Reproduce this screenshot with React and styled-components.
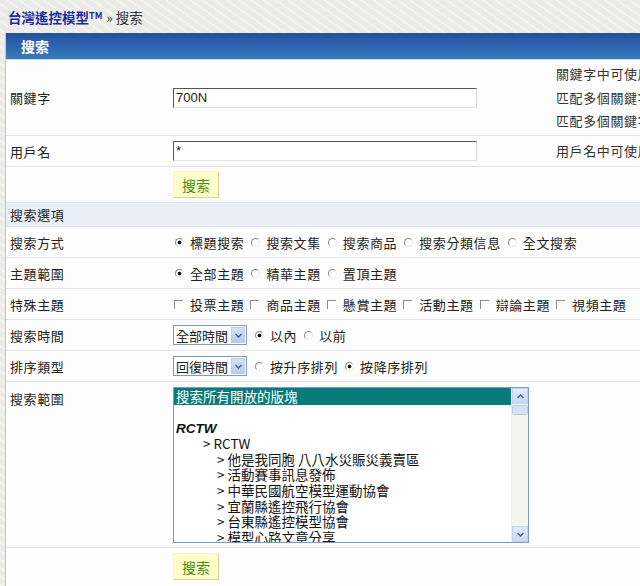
import styled, { createGlobalStyle } from 'styled-components';

const GlobalStyle = createGlobalStyle`
  html, body {
    margin: 0;
    padding: 0;
    overflow: hidden;
    background: #eeeeeb;
    font-family: "Noto Sans CJK TC", "Liberation Sans", sans-serif;
    font-size: 13px;
    color: #222;
  }
`;

const Page = styled.div`
  width: 640px;
  height: 586px;
  overflow: hidden;
  background:
    repeating-linear-gradient(35deg, rgba(255,255,255,0.35) 0 2px, transparent 2px 7px),
    #ebebe8;
`;

const Crumbs = styled.div`
  height: 33px;
  display: flex;
  align-items: center;
  padding-left: 8px;
  font-size: 13.5px;
  color: #333;
  gap: 4px;
`;

const SiteLink = styled.span`
  color: #1c2c9c;
  font-weight: bold;
  sup {
    font-size: 9px;
    vertical-align: 4px;
  }
`;

const Box = styled.div`
  margin-left: 5px;
  width: 900px;
  border-left: 1px solid #b9c8d8;
  background: #fdfdfd;
`;

const Head = styled.div`
  height: 26px;
  display: flex;
  align-items: center;
  padding-left: 15px;
  color: #fff;
  font-weight: bold;
  font-size: 14px;
  background: linear-gradient(#22509c, #3a7bbf);
  border-bottom: 1px solid #c4d6ea;
`;

const Row = styled.div`
  display: grid;
  grid-template-columns: 167px 383px 1fr;
  align-items: ${p => (p.$top ? 'start' : 'center')};
  height: ${p => p.$h}px;
  box-sizing: border-box;
  border-bottom: 1px solid #e2e6eb;
  background: ${p => (p.$shade ? '#e9eef7' : 'transparent')};
  letter-spacing: 0.6px;
`;

const Label = styled.div`
  padding-left: 4px;
  padding-top: ${p => p.$pt || 0}px;
`;

const Cell = styled.div`
  display: flex;
  align-items: center;
  white-space: nowrap;
  min-width: 0;
  padding-top: ${p => p.$pt || 0}px;
`;

const Help = styled.div`
  line-height: 23.5px;
  color: #333;
  white-space: nowrap;
`;

const TextInput = styled.div`
  width: 304px;
  height: 20px;
  box-sizing: border-box;
  border: 1px solid;
  border-color: #555 #d4d4d4 #e2e2e2 #555;
  background: #fff;
  font-family: "Liberation Sans", sans-serif;
  font-size: 13px;
  line-height: 18px;
  padding-left: 2px;
  color: #222;
  letter-spacing: 0;
`;

const Button = styled.div`
  width: 46px;
  height: 27px;
  box-sizing: border-box;
  display: flex;
  align-items: center;
  justify-content: center;
  background: #ffffc6;
  border: 1px solid;
  border-color: #f3f3dc #d6d29a #d6d29a #f3f3dc;
  color: #3d8f27;
  font-size: 14px;
  letter-spacing: 0;
`;

const Option = styled.span`
  display: inline-flex;
  align-items: center;
  flex-shrink: 0;
  white-space: nowrap;
  margin-right: 5px;
`;

const Radio = styled.span`
  width: 9px;
  height: 9px;
  flex-shrink: 0;
  box-sizing: border-box;
  margin: 0 6px 0 2px;
  border-radius: 50%;
  border: 1px solid;
  border-color: #8c8c8c #ececec #ececec #8c8c8c;
  background: ${p =>
    p.$on ? 'radial-gradient(circle, #111 1.6px, transparent 2.2px)' : 'transparent'};
`;

const Check = styled.span`
  width: 9px;
  height: 9px;
  flex-shrink: 0;
  box-sizing: border-box;
  margin: 0 7px 0 1px;
  border-top: 1px solid #8c8c8c;
  border-left: 1px solid #8c8c8c;
`;

const Select = styled.span`
  display: inline-flex;
  align-items: center;
  flex-shrink: 0;
  height: 20px;
  box-sizing: border-box;
  border: 1px solid #7f9db9;
  background: #fff;
  padding-left: 2px;
  margin-right: 6px;
  letter-spacing: 0;
`;

const SelectArrow = styled.span`
  width: 14px;
  height: 16px;
  margin: 0 1px 0 3px;
  display: flex;
  align-items: center;
  justify-content: center;
  background: linear-gradient(#d4e2f8, #b6caee);
  border: 1px solid #b9cbea;
  box-sizing: border-box;
`;

const ListBox = styled.div`
  width: 356px;
  height: 156px;
  flex-shrink: 0;
  box-sizing: border-box;
  border: 1px solid #7f9db9;
  background: #fff;
  display: flex;
  overflow: hidden;
  letter-spacing: 0;
`;

const ListItems = styled.div`
  flex: 1;
  overflow: hidden;
`;

const Item = styled.div`
  height: ${p => (p.$sel ? 17 : 15.6)}px;
  line-height: ${p => (p.$sel ? 17 : 15.6)}px;
  white-space: nowrap;
  font-size: 13.5px;
  padding-left: ${p => p.$indent || 2}px;
  color: ${p => (p.$sel ? '#fff' : '#111')};
  background: ${p => (p.$sel ? '#0a7b7b' : 'transparent')};
  font-family: ${p => (p.$group ? '"Liberation Sans", sans-serif' : 'inherit')};
  font-weight: ${p => (p.$group ? 'bold' : 'normal')};
  font-style: ${p => (p.$group ? 'italic' : 'normal')};
`;

const ScrollBar = styled.div`
  width: 16px;
  display: flex;
  flex-direction: column;
  justify-content: space-between;
  background: #f5f5f0;
  border-left: 1px solid #ededea;
`;

const ScrollBtn = styled.div`
  height: 16px;
  display: flex;
  align-items: center;
  justify-content: center;
  background: linear-gradient(#e2ebfb, #c9d8f3);
  border: 1px solid #c3d3ee;
  box-sizing: border-box;
`;

const Thumb = styled.div`
  height: 8px;
  margin-top: 1px;
  background: #d6e1f5;
  border: 1px solid #bccde9;
  border-radius: 2px;
`;

const Chevron = ({ up }) => (
  <svg width="7" height="5" viewBox="0 0 7 5">
    <path
      d={up ? 'M0.5 4 L3.5 1 L6.5 4' : 'M0.5 1 L3.5 4 L6.5 1'}
      fill="none"
      stroke="#4a5f9c"
      strokeWidth="1.5"
    />
  </svg>
);

const boards = [
  '他是我同胞 八八水災賑災義賣區',
  '活動賽事訊息發佈',
  '中華民國航空模型運動協會',
  '宜蘭縣遙控飛行協會',
  '台東縣遙控模型協會',
  '模型心路文章分享',
  '新手入門',
];

export default function App() {
  return (
    <Page>
      <GlobalStyle />
      <Crumbs>
        <SiteLink>
          台灣遙控模型<sup>TM</sup>
        </SiteLink>
        <span>» 搜索</span>
      </Crumbs>
      <Box>
        <Head>搜索</Head>
        <Row $h={76}>
          <Label>關鍵字</Label>
          <Cell>
            <TextInput>700N</TextInput>
          </Cell>
          <Help>
            關鍵字中可使用通配符 "*"
            <br />
            匹配多個關鍵字全部, 可用空格或 "AND" 連接. 如 win32 AND unix
            <br />
            匹配多個關鍵字其中部分, 可用 "|" 或 "OR" 連接. 如 win32 OR unix
          </Help>
        </Row>
        <Row $h={31}>
          <Label>用戶名</Label>
          <Cell>
            <TextInput>*</TextInput>
          </Cell>
          <Help>用戶名中可使用通配符 "*"</Help>
        </Row>
        <Row $h={36} $top>
          <Label />
          <Cell $pt={4}>
            <Button>搜索</Button>
          </Cell>
        </Row>
        <Row $h={24} $shade>
          <Label>搜索選項</Label>
        </Row>
        <Row $h={31}>
          <Label>搜索方式</Label>
          <Cell>
            <Option><Radio $on />標題搜索</Option>
            <Option><Radio />搜索文集</Option>
            <Option><Radio />搜索商品</Option>
            <Option><Radio />搜索分類信息</Option>
            <Option><Radio />全文搜索</Option>
          </Cell>
        </Row>
        <Row $h={31}>
          <Label>主題範圍</Label>
          <Cell>
            <Option><Radio $on />全部主題</Option>
            <Option><Radio />精華主題</Option>
            <Option><Radio />置頂主題</Option>
          </Cell>
        </Row>
        <Row $h={31}>
          <Label>特殊主題</Label>
          <Cell>
            <Option><Check />投票主題</Option>
            <Option><Check />商品主題</Option>
            <Option><Check />懸賞主題</Option>
            <Option><Check />活動主題</Option>
            <Option><Check />辯論主題</Option>
            <Option><Check />視頻主題</Option>
          </Cell>
        </Row>
        <Row $h={31}>
          <Label>搜索時間</Label>
          <Cell>
            <Select>
              全部時間
              <SelectArrow><Chevron /></SelectArrow>
            </Select>
            <Option><Radio $on />以內</Option>
            <Option><Radio />以前</Option>
          </Cell>
        </Row>
        <Row $h={31}>
          <Label>排序類型</Label>
          <Cell>
            <Select>
              回復時間
              <SelectArrow><Chevron /></SelectArrow>
            </Select>
            <Option><Radio />按升序排列</Option>
            <Option><Radio $on />按降序排列</Option>
          </Cell>
        </Row>
        <Row $h={166} $top>
          <Label $pt={7}>搜索範圍</Label>
          <Cell $pt={5}>
            <ListBox>
              <ListItems>
                <Item $sel>搜索所有開放的版塊</Item>
                <Item />
                <Item $group>RCTW</Item>
                <Item $indent={29}>&gt; RCTW</Item>
                {boards.map(b => (
                  <Item key={b} $indent={43}>
                    &gt; {b}
                  </Item>
                ))}
              </ListItems>
              <ScrollBar>
                <div>
                  <ScrollBtn><Chevron up /></ScrollBtn>
                  <Thumb />
                </div>
                <ScrollBtn><Chevron /></ScrollBtn>
              </ScrollBar>
            </ListBox>
          </Cell>
        </Row>
        <Row $h={40} $top>
          <Label />
          <Cell $pt={5}>
            <Button>搜索</Button>
          </Cell>
        </Row>
      </Box>
    </Page>
  );
}
